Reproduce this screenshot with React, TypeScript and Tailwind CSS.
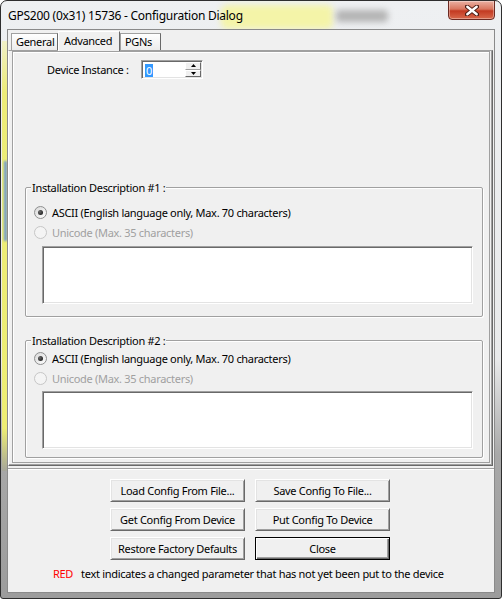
import React from "react";

const ui = "font-['Noto_Sans',sans-serif] text-[11px] leading-[15px] tracking-[-0.3px] text-black";

function Radio({ checked, disabled, label }: { checked?: boolean; disabled?: boolean; label: string }) {
  return (
    <div className="flex h-[20px] items-center">
      <span
        className={
          "flex h-[13px] w-[13px] items-center justify-center rounded-full border " +
          (disabled
            ? "border-[#c6c6c6] bg-[#f4f4f4]"
            : "border-[#8e8f8f] bg-[linear-gradient(135deg,#d8d8d8,#ffffff)]")
        }
      >
        {checked && <span className="h-[5px] w-[5px] rounded-full bg-[radial-gradient(circle_at_35%_35%,#6a6a6a,#0c0c0c)]" />}
      </span>
      <span className={"ml-[5px] " + (disabled ? "text-[#a0a0a0]" : "")}>{label}</span>
    </div>
  );
}

function GroupBox({ title, first }: { title: string; first?: boolean }) {
  return (
    <div
      className={
        "ml-[12px] w-[458px] rounded-[2px] border border-[#a0a0a0] shadow-[inset_1px_1px_0_#fff,1px_1px_0_#fff] " +
        (first ? "h-[130px]" : "h-[118px]")
      }
    >
      <div className="-mt-[8px] ml-[5px] h-[15px] w-max bg-[#f0f0f0] px-[1px]">{title}</div>
      <div className={"pl-[8px] " + (first ? "pt-[7px]" : "pt-[0px]")}>
        <Radio checked label="ASCII (English language only, Max. 70 characters)" />
        <Radio disabled label="Unicode (Max. 35 characters)" />
        <div
          className={
            "ml-[8px] h-[58px] w-[431px] border border-t-[#a0a0a0] border-l-[#a0a0a0] border-r-white border-b-white bg-white shadow-[inset_1px_1px_0_#696969,inset_-1px_-1px_0_#e3e3e3] " +
            (first ? "mt-[4px]" : "mt-[3px]")
          }
        />
      </div>
    </div>
  );
}

function Btn({ label, def }: { label: string; def?: boolean }) {
  return (
    <button
      className={
        "flex h-[23px] w-[135px] items-center justify-center bg-[#f0f0f0] " +
        (def
          ? "border border-black shadow-[inset_1px_1px_0_#fff,inset_-1px_-1px_0_#696969,inset_-2px_-2px_0_#a0a0a0]"
          : "border border-t-white border-l-white border-r-[#696969] border-b-[#696969] shadow-[inset_1px_1px_0_#e3e3e3,inset_-1px_-1px_0_#a0a0a0]")
      }
    >
      {label}
    </button>
  );
}

function Tab({ label, width, selected }: { label: string; width: string; selected?: boolean }) {
  return (
    <div
      className={
        width +
        " flex items-start border-l border-t border-r border-l-[#a0a0a0] border-t-[#a0a0a0] border-r-[#696969] " +
        (selected
          ? "relative z-10 -mb-[1px] h-[20px] bg-[#f0f0f0] pl-[5px] pt-[1px] border-l-white border-t-white"
          : "h-[17px] bg-[linear-gradient(#ffffff,#ececec)] pl-[4px] pt-[0px]")
      }
    >
      {label}
    </div>
  );
}

export default function App() {
  return (
    <div className={"relative h-[599px] w-[502px] overflow-hidden rounded-t-[7px] rounded-b-[3px] border border-[#2e2e2e] bg-[linear-gradient(to_bottom,#eef0f2_0%,#e9eaeb_60%,#a8a8a8_76%,#9c9c9c_100%)] " + ui}>
      {/* glass background bleed */}
      <div className="absolute left-[220px] top-[4px] h-[24px] w-[112px] rounded-[6px] bg-[#f4f4a8] blur-[3px]" />
      <div className="absolute left-[335px] top-[9px] h-[12px] w-[52px] rounded-[4px] bg-[#b4b4b4] blur-[3px]" />
      <div className="absolute left-[1px] top-[40px] h-[430px] w-[6px] bg-[linear-gradient(to_bottom,#f0f0c8,#ecec78_12%,#eeee74_90%,#a6a69a)]" />
      <div className="absolute left-[3px] top-[160px] h-[80px] w-[3px] bg-[#6f98cf] blur-[1px]" />

      {/* title bar */}
      <div className="relative flex h-[28px] items-center pl-[7px] pt-[1px] text-[12px] tracking-[-0.25px]">
        <span>GPS200 (0x31) 15736 - Configuration Dialog</span>
        <div className="absolute right-[6px] top-[-1px] flex h-[20px] w-[47px] items-center justify-center rounded-b-[4px] border border-[#6b2a22] bg-[linear-gradient(to_bottom,#eab1a3_0%,#d8765f_45%,#c33a22_55%,#d8694c_100%)] shadow-[inset_0_0_0_1px_rgba(255,255,255,0.35)]">
          <svg width="14" height="11" viewBox="0 0 14 11">
            <path d="M2 1.5 L12 9.5 M12 1.5 L2 9.5" stroke="#4a1c14" strokeWidth="4.2" strokeLinecap="round" />
            <path d="M2.3 1.8 L11.7 9.2 M11.7 1.8 L2.3 9.2" stroke="#ffffff" strokeWidth="2.4" strokeLinecap="round" />
          </svg>
        </div>
      </div>

      {/* client area */}
      <div className="relative mx-[6px] flex h-[564px] flex-col border border-[#8a8a8a] bg-[#f0f0f0]">
        {/* tab control */}
        <div className="h-[438px] pt-[1px]">
          <div className="flex h-[19px] items-end pl-[3px]">
            <Tab label="General" width="w-[47px]" />
            <Tab label="Advanced" width="w-[62px]" selected />
            <Tab label="PGNs" width="w-[41px]" />
          </div>
          <div className="h-[416px] w-[485px] border-l border-t border-l-white border-t-[#a0a0a0] border-r border-b border-r-[#696969] border-b-[#696969] pb-[1px] pl-[3px] pr-[1px] shadow-[inset_-1px_-1px_0_#a0a0a0]">
            <div className="h-[412px] w-[478px] border border-[#a0a0a0] shadow-[inset_1px_1px_0_#fff]">
              <div className="flex items-center pl-[34px] pt-[8px]">
                <span className="w-[94px]">Device Instance :</span>
                <div className="flex h-[19px] w-[62px] border border-t-[#a0a0a0] border-l-[#a0a0a0] border-r-white border-b-white bg-white shadow-[inset_1px_1px_0_#696969,inset_-1px_-1px_0_#e3e3e3]">
                  <div className="flex flex-1 items-center pl-[3px] pt-[1px]">
                    <span className="bg-[#3399ff] px-[1px] leading-[13px] text-white">0</span>
                  </div>
                  <div className="flex w-[17px] flex-col py-[1px] pr-[1px]">
                    <div className="flex flex-1 items-center justify-center border border-t-white border-l-white border-r-[#696969] border-b-[#a0a0a0] bg-[#f0f0f0]">
                      <svg width="5" height="3" viewBox="0 0 5 3"><path d="M0 3 L2.5 0 L5 3 Z" fill="#000" /></svg>
                    </div>
                    <div className="flex flex-1 items-center justify-center border border-t-white border-l-white border-r-[#696969] border-b-[#696969] bg-[#f0f0f0]">
                      <svg width="5" height="3" viewBox="0 0 5 3"><path d="M0 0 L5 0 L2.5 3 Z" fill="#000" /></svg>
                    </div>
                  </div>
                </div>
              </div>
              <div className="mt-[108px]">
                <GroupBox title="Installation Description #1 :" first />
              </div>
              <div className="mt-[23px]">
                <GroupBox title="Installation Description #2 :" />
              </div>
            </div>
          </div>
        </div>

        {/* buttons */}
        <div className="flex-1 border-t border-[#a0a0a0] shadow-[inset_0_1px_0_#fff]">
          <div className="grid w-max grid-cols-[135px_135px] gap-x-[10px] gap-y-[6px] pl-[102px] pt-[10px]">
            <Btn label="Load Config From File..." />
            <Btn label="Save Config To File..." />
            <Btn label="Get Config From Device" />
            <Btn label="Put Config To Device" />
            <Btn label="Restore Factory Defaults" />
            <Btn label="Close" def />
          </div>
          <div className="mt-[6px] flex pl-[45px]">
            <span className="text-[#ff0000]">RED</span>
            <span className="ml-[8px]">text indicates a changed parameter that has not yet been put to the device</span>
          </div>
        </div>
      </div>
    </div>
  );
}
